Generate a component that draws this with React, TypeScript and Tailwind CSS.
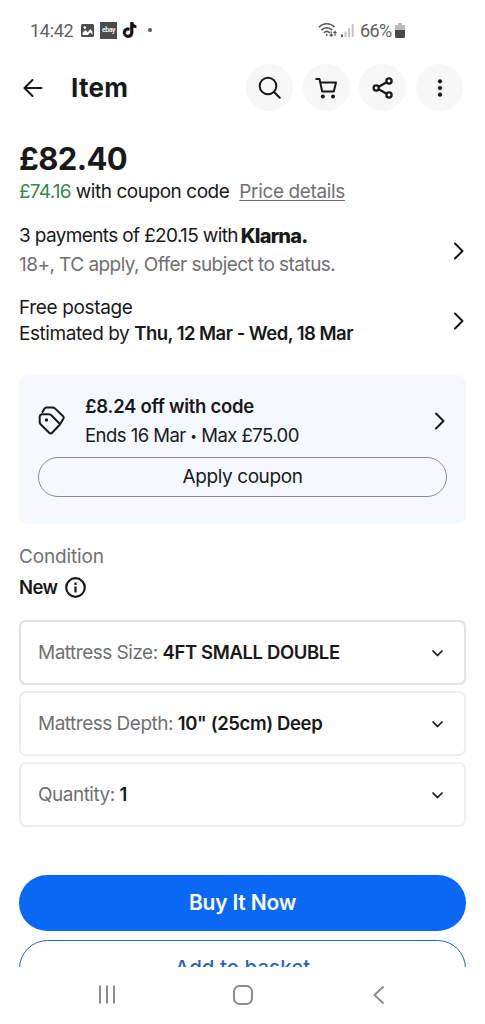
import type { ReactNode } from "react";

function RoundButton({ label, children }: { label: string; children: ReactNode }) {
  return (
    <button aria-label={label} className="flex size-[47px] items-center justify-center rounded-full bg-[#f7f7f7]">
      {children}
    </button>
  );
}

function ChevronRight() {
  return (
    <svg width="11" height="18" viewBox="0 0 11 18" fill="none" stroke="#191919" strokeWidth="2" strokeLinecap="round" strokeLinejoin="round" className="mr-[2px] shrink-0">
      <path d="M2 1.500 9.500 9 2 16.500" />
    </svg>
  );
}

function StatusBar() {
  return (
    <div className="flex h-[60px] items-center justify-between pr-[80px] pl-[30px] font-[Roboto] text-[18px] text-[#606060]">
      <div className="flex items-center">
        <span className="w-[51px] tracking-[-0.3px] whitespace-nowrap">14:42</span>
        <svg width="13" height="13" viewBox="0 0 13 13">
          <rect width="13" height="13" rx="1.5" fill="#4b4b4b" />
          <path d="M1.700 11V8.500L4.400 6l2.300 2.300L9.200 5l2.200 2.600V11L9.300 8.300 7 11z" fill="#fff" />
          <circle cx="3.800" cy="3.600" r="1.300" fill="#fff" />
        </svg>
        <span className="ml-1.5 flex h-[17px] w-[17px] items-center justify-center bg-[#4b4b4b] text-[7px] font-medium tracking-[-0.4px] text-white">
          ebay
        </span>
        <svg className="ml-[5px]" width="16" height="18" viewBox="0 0 16 18" fill="none" strokeWidth="2.800">
          <path d="M7.400 8.200a3.700 3.700 0 1 0 2.300 3.700V1.200c.3 2.600 2 4.300 4.500 4.500" stroke="#6fe3e3" transform="translate(-.6 -.3)" />
          <path d="M7.400 8.200a3.700 3.700 0 1 0 2.300 3.700V1.200c.3 2.600 2 4.300 4.500 4.500" stroke="#f0607c" transform="translate(.5 .4)" />
          <path d="M7.400 8.200a3.700 3.700 0 1 0 2.300 3.700V1.200c.3 2.600 2 4.300 4.500 4.500" stroke="#111" />
        </svg>
        <span className="ml-[10px] size-1 rounded-full bg-[#555]" />
      </div>
      <div className="flex items-center">
        <svg width="20" height="16" viewBox="0 0 20 16" fill="none" stroke="#555" strokeWidth="1.500">
          <path d="M1 5.200c4.300-4.600 11.200-4.600 15.500 0M3.300 8.100c3.200-3.200 7.700-3.200 10.900 0M5.800 10.800c1.800-1.700 4.200-1.700 6 0" />
          <circle cx="8.700" cy="13" r="1" fill="#555" stroke="none" />
          <path d="M13.200 9.500V14m-1.600-1.500 1.600 1.600 1.600-1.600M17 14V9.500M15.500 11 17 9.500l1.500 1.500" strokeWidth="1.100" />
        </svg>
        <svg className="ml-[3px]" width="13" height="14" viewBox="0 0 13 14">
          <path d="M0 11.500h2V14H0z" fill="#555" />
          <path d="M3.500 8.500h2V14h-2zM7 5h2v9H7zM10.700 1h2v13h-2z" fill="#c4c4c4" />
        </svg>
        <span className="ml-[6px] w-[35px] tracking-[-0.6px] whitespace-nowrap">66%</span>
        <svg width="10" height="15" viewBox="0 0 10 15">
          <path d="M3 0h4v2h3v5H0V2h3z" fill="#bbb" />
          <path d="M0 7h10v6.500a1.500 1.500 0 0 1-1.500 1.500h-7A1.500 1.500 0 0 1 0 13.500z" fill="#4b4b4b" />
        </svg>
      </div>
    </div>
  );
}

function Header() {
  return (
    <header className="flex h-[55px] items-center pr-[22px] pl-[23px]">
      <svg width="20" height="20" viewBox="0 0 20 20" fill="none" stroke="#191919" strokeWidth="2" strokeLinecap="round" strokeLinejoin="round">
        <path d="M9.500 2 1.500 10l8 8M1.500 10h17" />
      </svg>
      <h1 className="-mt-px ml-7 flex-1 text-[26px] font-bold tracking-[0.3px]">Item</h1>
      <div className="flex gap-[9.600px]">
        <RoundButton label="Search">
          <svg width="24" height="24" viewBox="0 0 24 24" fill="none" stroke="#191919" strokeWidth="2" strokeLinecap="round">
            <circle cx="10" cy="10" r="8.300" />
            <path d="m16.200 16.200 5.600 5.600" />
          </svg>
        </RoundButton>
        <RoundButton label="Basket">
          <svg width="24" height="24" viewBox="0 0 24 24" fill="none" stroke="#191919" strokeWidth="2" strokeLinejoin="round">
            <path d="M1.500 3h4l2.700 12.500h11.600l2.200-9H6.500" />
            <circle cx="8.800" cy="20.500" r="2" fill="#191919" stroke="none" />
            <circle cx="19" cy="20.500" r="2" fill="#191919" stroke="none" />
          </svg>
        </RoundButton>
        <RoundButton label="Share">
          <svg width="22" height="22" viewBox="0 0 22 22" fill="none" stroke="#191919" strokeWidth="2.300">
            <circle cx="4.200" cy="11" r="2.600" />
            <circle cx="17" cy="4" r="2.600" />
            <circle cx="17" cy="18" r="2.600" />
            <path d="M6.600 9.700 14.600 5.300M6.600 12.300l8 4.400" />
          </svg>
        </RoundButton>
        <RoundButton label="More options">
          <svg width="6" height="20" viewBox="0 0 6 20" fill="#191919">
            <circle cx="3" cy="3.300" r="2.100" />
            <circle cx="3" cy="10" r="2.100" />
            <circle cx="3" cy="16.700" r="2.100" />
          </svg>
        </RoundButton>
      </div>
    </header>
  );
}

function Coupon() {
  return (
    <section className="mt-7 h-[149px] rounded-[9px] bg-[#f5f8ff] px-[19px] pt-[17px]">
      <div className="flex h-[58px] items-center">
        <svg className="-mt-px" width="28" height="30" viewBox="0 0 28 30" fill="none" stroke="#191919" strokeWidth="2" strokeLinejoin="round" strokeLinecap="round">
          <path d="M1.700 10.800a2.500 2.500 0 0 1 2.500-2.500h6.600a4 4 0 0 1 2.800 1.200l8.500 8.700-8 8.600a2 2 0 0 1-2.900 0L3 18.700a4 4 0 0 1-1.300-3z" />
          <path d="M4.500 6 6.400 2.700A2.500 2.500 0 0 1 8.600 1.500h5.800a4 4 0 0 1 2.800 1.100l7.900 7.600a2 2 0 0 1 .300 2.500l-3.200 5.300" />
          <circle cx="8.500" cy="14" r="1.700" fill="#191919" stroke="none" />
        </svg>
        <div className="ml-[19px] flex-1 leading-[28px]">
          <p>
            <b className="text-[18.500px] font-semibold tracking-[-0.28px]">£8.24 off with code</b>
          </p>
          <p className="text-[18.500px] tracking-[-0.54px] whitespace-nowrap">
            Ends 16 Mar <span className="align-[2px] text-[12px]">•</span> Max £75.00
          </p>
        </div>
        <ChevronRight />
      </div>
      <button className="mt-[7px] flex h-[40px] w-full items-center justify-center rounded-full border-[1.500px] border-[#8b8c91]">
        <span className="text-[19px] tracking-[-0.4px]">Apply coupon</span>
      </button>
    </section>
  );
}

type OptionProps = { label: string; value: string; active?: boolean };

function Option({ label, value, active }: OptionProps) {
  return (
    <div className={`flex h-[65px] items-center justify-between rounded-[7px] border-2 px-[17px] pt-[2px] ${active ? "border-[#e2e2e2] shadow-[0_0_1px_#ddd]" : "border-[#eeeeee]"}`}>
      <p className="whitespace-nowrap">
        <span className="tracking-[-0.5px] text-[#707070]">{label}: </span>
        <b className="text-[18.500px] font-semibold tracking-[-0.38px]">{value}</b>
      </p>
      <svg className="mr-[3px]" width="13" height="9" viewBox="0 0 13 9" fill="none" stroke="#191919" strokeWidth="1.700" strokeLinecap="round" strokeLinejoin="round">
        <path d="m2 2 4.500 4.500L11 2" />
      </svg>
    </div>
  );
}

function NavBar() {
  return (
    <nav className="flex h-[57px] items-center justify-between pr-[100px] pb-[2px] pl-[98px]">
      <svg width="18" height="19" viewBox="0 0 18 19" stroke="#8c8c8c" strokeWidth="2">
        <path d="M2 .5v18M9 .5v18M16 .5v18" />
      </svg>
      <svg className="-ml-[2px]" width="20" height="20" viewBox="0 0 20 20" fill="none" stroke="#8c8c8c" strokeWidth="2">
        <rect x="1" y="1" width="18" height="18" rx="5.500" />
      </svg>
      <svg width="13" height="20" viewBox="0 0 13 20" fill="none" stroke="#8c8c8c" strokeWidth="2">
        <path d="m11.500 1.500-9 8.500 9 8.500" />
      </svg>
    </nav>
  );
}

export default function App() {
  return (
    <div className="flex h-[1024px] w-[485px] flex-col overflow-hidden bg-white font-[Inter,sans-serif] text-[19px] text-[#191919]">
      <StatusBar />
      <Header />
      <main className="flex-1 overflow-hidden px-[19px]">
        <p className="mt-[24px] h-[41px] text-[31px] leading-[40px] font-bold tracking-[-0.6px]">£82.40</p>
        <p className="flex h-[25px] items-center whitespace-nowrap">
          <span className="tracking-[-0.75px] text-[#3a8748]">£74.16</span>
          <span className="ml-[5px] tracking-[-0.46px]">with coupon code</span>
          <a className="ml-[10px] tracking-[-0.37px] text-[#707070] underline underline-offset-[2px]">Price details</a>
        </p>
        <section className="mt-[17px] flex items-center justify-between">
          <div className="leading-[28px] whitespace-nowrap">
            <p className="flex h-7 items-center">
              <span className="tracking-[-0.64px]">3 payments of £20.15 with</span>
              <b className="ml-[3px] text-[20px] font-extrabold tracking-[-0.8px]">Klarna.</b>
            </p>
            <p className="h-[29px] pt-px tracking-[-0.55px] text-[#707070]">18+, TC apply, Offer subject to status.</p>
          </div>
          <ChevronRight />
        </section>
        <section className="mt-[16px] flex items-center justify-between leading-[26px]">
          <div className="whitespace-nowrap">
            <p className="tracking-[-0.35px]">Free postage</p>
            <p className="-mt-px">
              <span className="tracking-[-0.44px]">Estimated by </span>
              <b className="text-[18.500px] font-semibold tracking-[-0.53px]">Thu, 12 Mar - Wed, 18 Mar</b>
            </p>
          </div>
          <ChevronRight />
        </section>
        <Coupon />
        <section className="mt-[17px]">
          <p className="leading-[31px] tracking-[-0.15px] text-[#707070]">Condition</p>
          <div className="flex h-8 items-center gap-2">
            <b className="text-[18.500px] font-semibold tracking-[-0.6px]">New</b>
            <svg className="-mt-[2px]" width="21" height="21" viewBox="0 0 21 21" fill="none" stroke="#191919" strokeWidth="2.200">
              <circle cx="10.500" cy="10.500" r="9.300" />
              <path d="M10.500 9.500v6M10.500 5.500V8" />
            </svg>
          </div>
        </section>
        <section className="mt-4 flex flex-col gap-[6px]">
          <Option label="Mattress Size" value="4FT SMALL DOUBLE" active />
          <Option label="Mattress Depth" value={'10" (25cm) Deep'} />
          <Option label="Quantity" value="1" />
        </section>
        <button className="mt-[48px] flex h-[56px] w-full items-center justify-center rounded-full bg-[#0968f6] pb-px text-[21px] font-semibold text-white">
          <span className="tracking-[-0.2px]">Buy It Now</span>
        </button>
        <button className="mt-[9px] flex h-[57px] w-full items-center justify-center rounded-full border-[1.500px] border-[#2b67b8] text-[20.500px] font-medium text-[#2b67b8]">
          <span>Add to basket</span>
        </button>
      </main>
      <NavBar />
    </div>
  );
}
